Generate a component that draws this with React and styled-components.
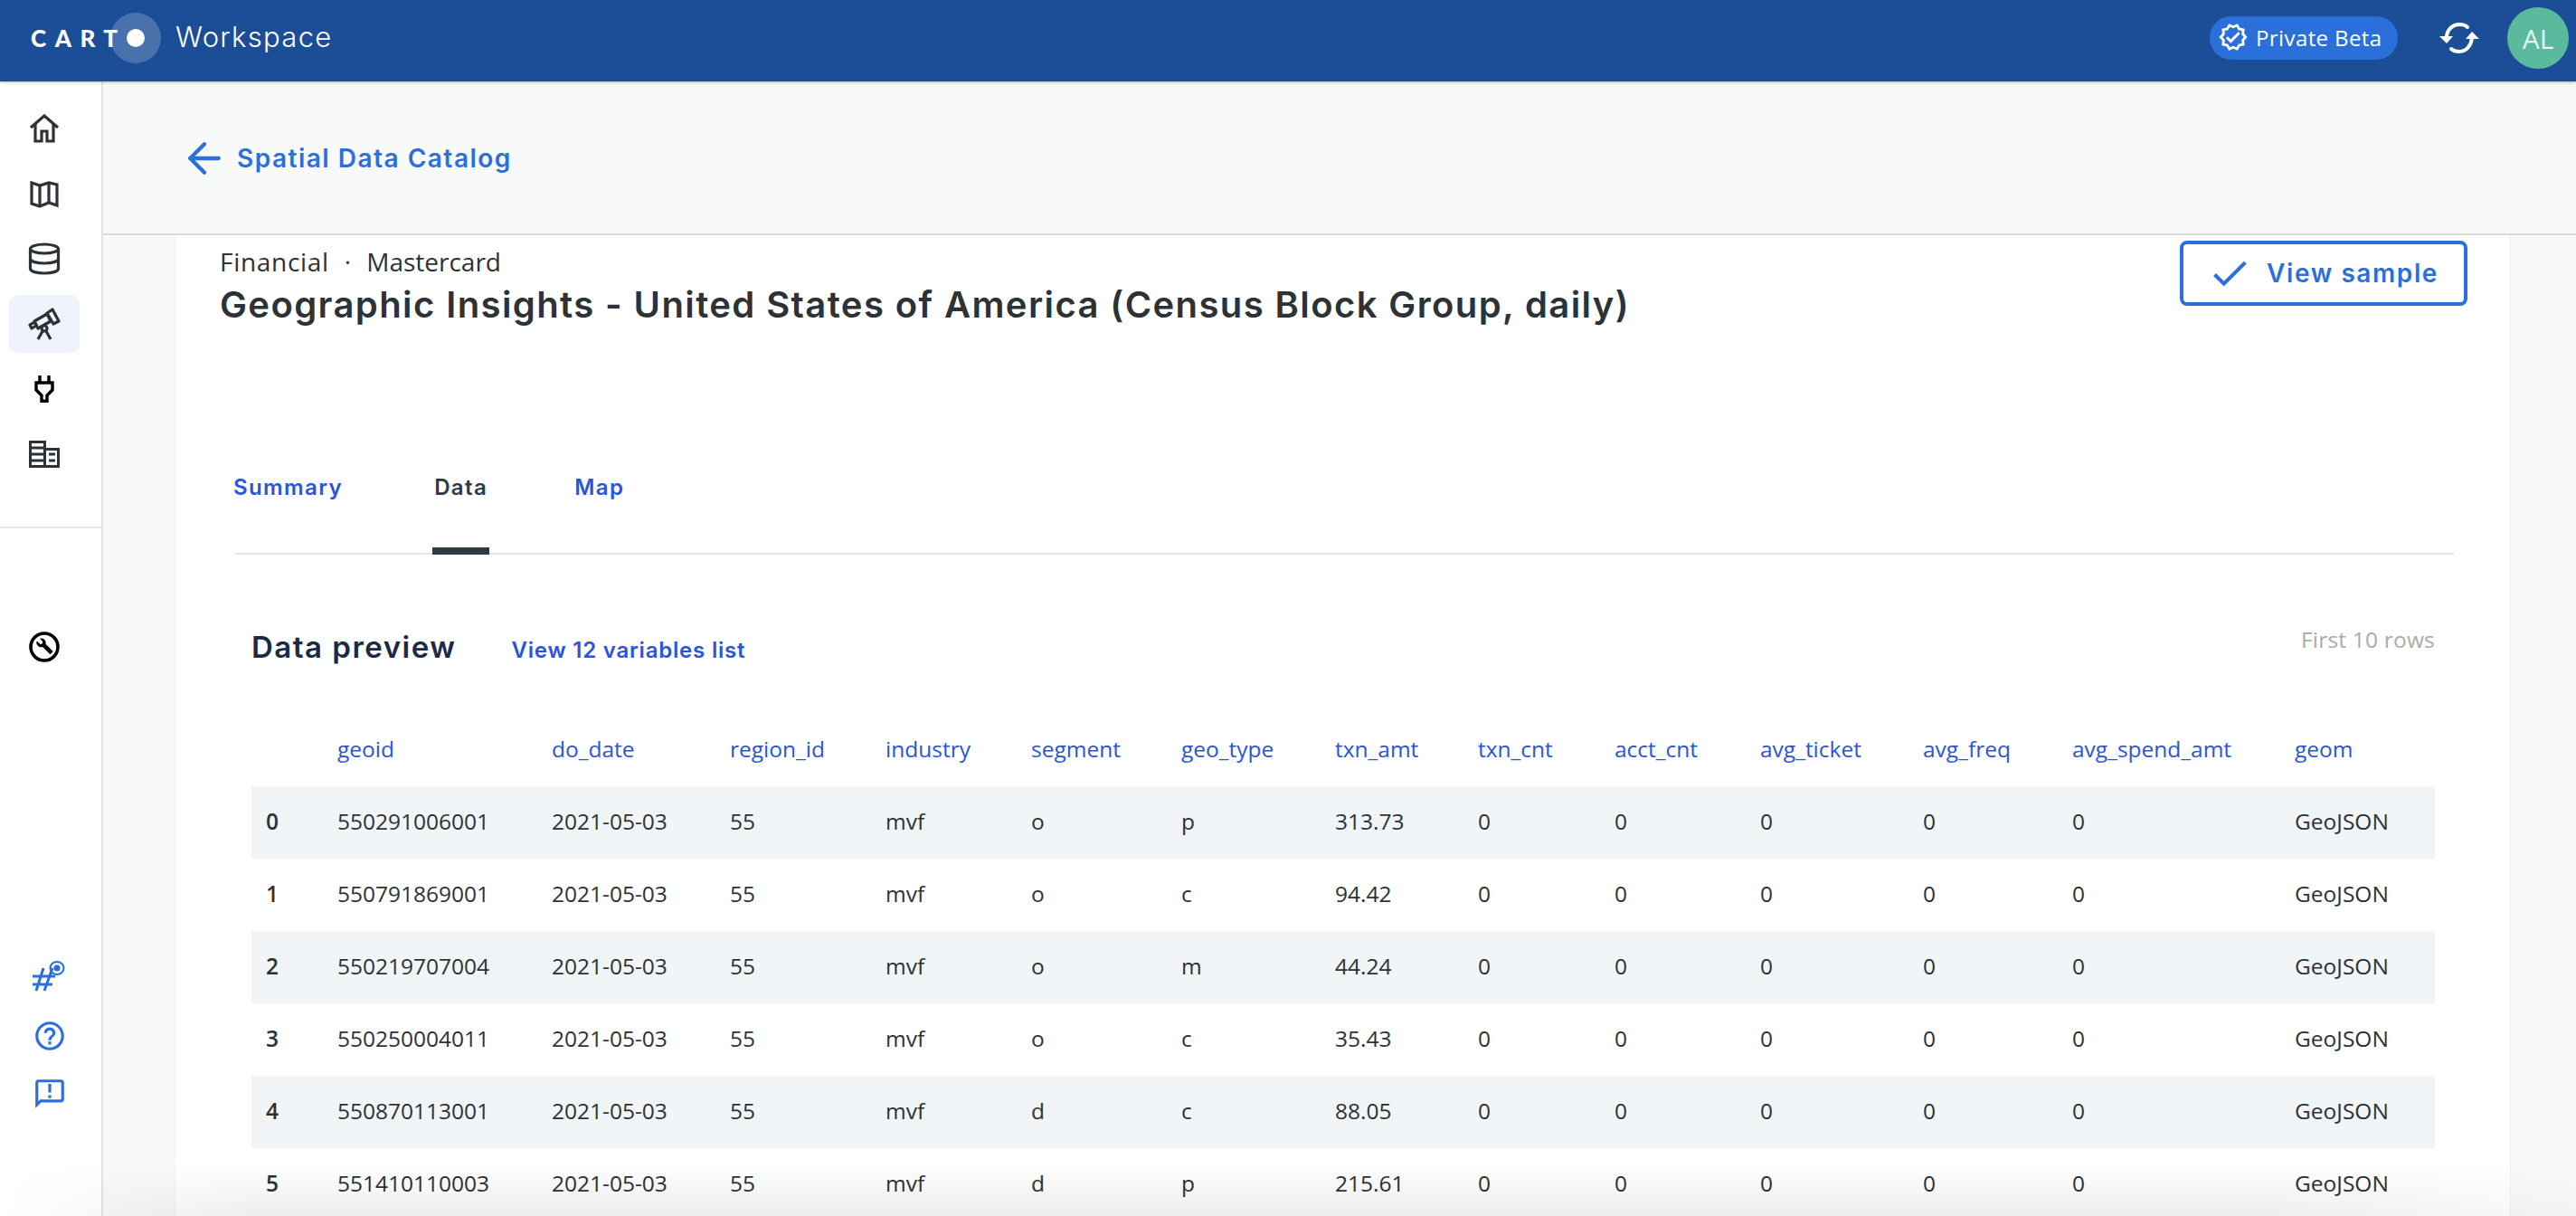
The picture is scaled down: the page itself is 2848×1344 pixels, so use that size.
import React from 'react';
import styled, { createGlobalStyle } from 'styled-components';
import { ArrowLeft } from 'lucide-react';
import { MdCheck, MdHelpOutline, MdOutlineAnnouncement, MdOutlineVerified } from 'react-icons/md';

const Global = createGlobalStyle`
  html, body { margin: 0; padding: 0; background: #fff; }
  * { box-sizing: border-box; }
`
const Page = styled.div`
  position: relative;
  display: flex;
  flex-direction: column;
  height: 100vh;
  overflow: hidden;
  font-family: 'Open Sans', sans-serif;
  color: #2c3a45;
`
//Header
const TopBar = styled.header`
  flex: none;
  height: 90px;
  background-color: #1c4e98;
  box-shadow: 0 1px 3px rgba(0, 0, 0, 0.3);
  z-index: 2;
  display: flex;
  align-items: center;
  padding: 0 8px 6px 34px;
`
const Logo = styled.div`
  display: flex;
  align-items: center;
  width: 160px;
  font-family: Lato, sans-serif;
  font-weight: 900;
  font-size: 26px;
  letter-spacing: 9.5px;
  color: #fff;
`
const LogoDot = styled.span`
  flex: none;
  width: 56px;
  height: 56px;
  margin-left: -18px;
  border-radius: 50%;
  background-color: rgba(255, 255, 255, 0.2);
  display: flex;
  align-items: center;
  justify-content: center;
  &::after {
    content: "";
    width: 20px;
    height: 20px;
    border-radius: 50%;
    background-color: #fff;
  }
`
const Product = styled.div`
  padding-bottom: 3px;
  font-family: Inter, sans-serif;
  font-weight: 300;
  font-size: 31px;
  letter-spacing: 1.3px;
  color: #fff;
`
const BetaPill = styled.div`
  margin-left: auto;
  width: 208px;
  height: 48px;
  border-radius: 24px;
  background-color: #2b6fdb;
  color: #fff;
  display: flex;
  align-items: center;
  gap: 8px;
  padding: 0 0 2px 9px;
  font-size: 24px;
  letter-spacing: 0.4px;
  svg { font-size: 34px; }
`
const SyncButton = styled.div`
  display: flex;
  margin-left: 46px;
  margin-right: 31px;
`
const Avatar = styled.div`
  width: 68px;
  height: 68px;
  border-radius: 50%;
  background-color: #5bba9d;
  color: #e4f4ee;
  font-size: 30px;
  display: flex;
  align-items: center;
  justify-content: center;
`
const Body = styled.div`
  flex: 1;
  min-height: 0;
  display: flex;
`
//Sidebar
const SideBar = styled.nav`
  flex: none;
  width: 114px;
  border-right: 2px solid #e2e3e3;
  background-color: #fff;
  display: flex;
  flex-direction: column;
`
const NavList = styled.div`
  display: flex;
  flex-direction: column;
  align-items: flex-start;
  padding: 20px 0 0 10px;
  gap: 8px;
  height: 494px;
  border-bottom: 2px solid #e8e8e8;
`
const ToolGroup = styled.div`
  padding: 99px 0 0 10px;
`
const NavItem = styled.div`
  width: 78px;
  height: 64px;
  flex: none;
  display: flex;
  align-items: center;
  justify-content: center;
  border-radius: 10px;
  background-color: ${props => props.active ? "#eff3fb" : "transparent"};
  color: ${props => props.dark ? "#000" : "#2c3236"};
`
const HelpList = styled.div`
  margin-top: auto;
  padding: 0 0 120px 36px;
  display: flex;
  flex-direction: column;
  gap: 30px;
  color: #2b6fdb;
`
const Helper = styled.div`
  display: flex;
  height: 34px;
`
//Main
const Main = styled.main`
  flex: 1;
  min-width: 0;
  background-color: #f8f9f9;
  display: flex;
  flex-direction: column;
`
const SubHeader = styled.div`
  flex: none;
  height: 170px;
  border-bottom: 2px solid #d9dbdb;
  display: flex;
  align-items: center;
  gap: 9px;
  padding: 2px 0 0 85px;
  color: #2b6fdb;
  font-family: Inter, sans-serif;
  font-weight: 600;
  font-size: 28px;
  letter-spacing: 1.5px;
`
const Card = styled.section`
  flex: 1;
  margin: 0 72px 0 79px;
  background-color: #fff;
  border-left: 1px solid #f0f1f1;
  border-right: 1px solid #f0f1f1;
  padding: 6px 47px 0 49px;
`
const CardHead = styled.div`
  display: flex;
  justify-content: space-between;
  align-items: flex-start;
  height: 219px;
`
const TitleBlock = styled.div`
  padding-top: 4px;
`
const Crumbs = styled.div`
  display: flex;
  gap: 17px;
  font-size: 28px;
  line-height: 38px;
  color: #2c3236;
`
const CrumbRoot = styled.span`
  font-weight: 500;
  letter-spacing: 0.7px;
`
const Title = styled.h1`
  margin: 5px 0 0;
  font-family: Inter, sans-serif;
  font-weight: 600;
  font-size: 40px;
  line-height: 48px;
  letter-spacing: 1.4px;
  color: #2c3236;
`
const SampleButton = styled.button`
  width: 318px;
  height: 72px;
  border: 4px solid #2b6fdb;
  border-radius: 8px;
  background-color: #fff;
  color: #2b6fdb;
  display: flex;
  align-items: center;
  gap: 16px;
  font-family: Inter, sans-serif;
  font-weight: 600;
  font-size: 28px;
  letter-spacing: 1.6px;
  padding: 0 0 0 26px;
`
const Tabs = styled.div`
  display: flex;
  height: 128px;
  margin: 0 15px 0 16px;
  border-bottom: 2px solid #e6e6ea;
`
const Tab = styled.div`
  height: 128px;
  margin-left: ${props => props.offset}px;
  padding: 0 2px 14px;
  display: flex;
  align-items: center;
  border-bottom: 8px solid ${props => props.active ? "#2c3a45" : "transparent"};
  color: ${props => props.active ? "#2c3a45" : "#2a55d8"};
  font-family: Inter, sans-serif;
  font-weight: 600;
  font-size: 24px;
  letter-spacing: 1.4px;
`
const PreviewHead = styled.div`
  display: flex;
  align-items: baseline;
  margin: 82px 36px 0 35px;
  height: 86px;
`
const PreviewTitle = styled.h2`
  margin: 0;
  font-family: Inter, sans-serif;
  font-weight: 600;
  font-size: 33px;
  letter-spacing: 1.5px;
  color: #1b2a44;
`
const VariablesLink = styled.div`
  margin-left: 61px;
  font-family: Inter, sans-serif;
  font-weight: 600;
  font-size: 24px;
  letter-spacing: 0.8px;
  color: #2a55d8;
`
const RowCount = styled.div`
  margin-left: auto;
  font-size: 24.5px;
  line-height: 24px;
  letter-spacing: 0.2px;
  color: #aaaaaa;
  align-self: flex-start;
`
const Table = styled.div`
  margin: 0 36px 0 35px;
`
const Row = styled.div`
  display: grid;
  grid-template-columns: 79px 237px 197px 172px 161px 166px 170px 158px 151px 161px 180px 165px 246px 1fr;
  align-items: center;
  height: ${props => props.head ? "88px" : "80px"};
  padding: ${props => props.head ? "4px 0 0 16px" : "0 0 4px 16px"};
  background-color: ${props => props.striped ? "#f2f5f8" : "transparent"};
  color: ${props => props.head ? "#2a55d8" : "#2c3236"};
  font-size: 24.5px;
`
const RowIndex = styled.span`
  font-weight: 600;
`
const BottomFade = styled.div`
  position: absolute;
  left: 0;
  right: 0;
  bottom: 0;
  height: 60px;
  background: linear-gradient(rgba(0, 0, 0, 0), rgba(0, 0, 0, 0.07));
  mask-image: linear-gradient(90deg, transparent, #000 10%, #000 88%, rgba(0, 0, 0, 0.3));
  pointer-events: none;
`

const columns = ["geoid", "do_date", "region_id", "industry", "segment", "geo_type", "txn_amt", "txn_cnt", "acct_cnt", "avg_ticket", "avg_freq", "avg_spend_amt", "geom"]

const rows = [
  ["550291006001", "o", "p", "313.73"],
  ["550791869001", "o", "c", "94.42"],
  ["550219707004", "o", "m", "44.24"],
  ["550250004011", "o", "c", "35.43"],
  ["550870113001", "d", "c", "88.05"],
  ["551410110003", "d", "p", "215.61"],
]

const SyncIcon = () => (
  <svg width="44" height="34" viewBox="0 0 44 34" fill="none" stroke="#fff" strokeWidth="4" strokeLinecap="round">
    <path d="M8 15C9 7 15 2 22 2c4 0 7 1 9 3" />
    <path d="M36 17c-1 8-6 15-14 15-4 0-7-1-9-3" />
    <path d="M0 15h15L8 23z" fill="#fff" stroke="none" />
    <path d="M29 18h15L36 10z" fill="#fff" stroke="none" />
  </svg>
)

const HomeIcon = () => (
  <svg width="34" height="32" viewBox="0 0 34 32" fill="none" stroke="currentColor" strokeWidth="3.2">
    <path d="M2 15L17 2l15 13" />
    <path d="M7 11v19h7V19h6v11h7V11" />
  </svg>
)
const MapIcon = () => (
  <svg width="32" height="32" viewBox="0 0 32 32" fill="none" stroke="currentColor" strokeWidth="3.2">
    <path d="M2 4l9 3 10-3 9 2v23l-9-3-10 4-9-3z" />
    <path d="M11 7v22M21 4v22" />
  </svg>
)
const DatabaseIcon = () => (
  <svg width="36" height="36" viewBox="0 0 36 36" fill="none" stroke="currentColor" strokeWidth="3.2">
    <ellipse cx="18" cy="7" rx="15.5" ry="5" />
    <path d="M2.500 7v22c0 3 7 5 15.500 5s15.500-2 15.500-5V7" />
    <path d="M2.500 18c0 3 7 5 15.500 5s15.500-2 15.500-5" />
  </svg>
)
const TelescopeIcon = () => (
  <svg width="36" height="36" viewBox="0 0 36 36" fill="none" stroke="currentColor" strokeWidth="3.2" strokeLinejoin="round">
    <path d="M2 19l5-3 2 4-5 3z" />
    <path d="M7 15l14-8 4 8-14 8z" />
    <path d="M21 6l6-4 7 13-6 3z" />
    <circle cx="18" cy="23" r="3" />
    <path d="M16 26l-5 9M20 26l5 9" />
  </svg>
)
const PlugIcon = () => (
  <svg width="22" height="30" viewBox="0 0 22 30" fill="none" stroke="currentColor" strokeWidth="3.4">
    <path d="M6 0v8M16 0v8" />
    <path d="M2 8h18v8l-6 6v6.300H8V22l-6-6z" />
  </svg>
)
const BuildingIcon = () => (
  <svg width="34" height="30" viewBox="0 0 34 30" fill="none" stroke="currentColor" strokeWidth="3">
    <path d="M1.500 1.500h16v27h-16zM1.500 8h16M1.500 15h16M1.500 22h16" />
    <path d="M17.500 9.500h15v19h-15" />
    <path d="M22 15h7M22 22h7" />
  </svg>
)
const WrenchIcon = () => (
  <svg width="34" height="34" viewBox="0 0 34 34">
    <circle cx="17" cy="17" r="15" fill="none" stroke="#000" strokeWidth="3.6" />
    <path d="M9 10.500l3.500 3.500 2.200-.6.6-2.200L12 7.800c3-1 6.200.9 6.600 4 .1.7.1 1.300-.1 2l8.200 8.200-3.300 3.300-8.300-8.200c-3.600 1-7.100-2.100-6.800-5.700z" fill="#000" />
  </svg>
)
const HashIcon = () => (
  <svg width="36" height="34" viewBox="0 0 36 34" fill="none" stroke="currentColor" strokeWidth="3">
    <path d="M12 8L4 33M22 8L13 33M0 17h25M0 26h22" />
    <ellipse cx="27" cy="8" rx="7.500" ry="7" strokeWidth="2" />
    <circle cx="27" cy="8" r="3.500" fill="currentColor" stroke="none" />
  </svg>
)

function SideNav() {
  return (
    <SideBar>
      <NavList>
        <NavItem><HomeIcon /></NavItem>
        <NavItem><MapIcon /></NavItem>
        <NavItem><DatabaseIcon /></NavItem>
        <NavItem active><TelescopeIcon /></NavItem>
        <NavItem dark><PlugIcon /></NavItem>
        <NavItem><BuildingIcon /></NavItem>
      </NavList>
      <ToolGroup>
        <NavItem dark><WrenchIcon /></NavItem>
      </ToolGroup>
      <HelpList>
        <Helper><HashIcon /></Helper>
        <Helper><MdHelpOutline size={38} /></Helper>
        <Helper><MdOutlineAnnouncement size={38} /></Helper>
      </HelpList>
    </SideBar>
  );
}

function App() {
  return (
    <Page>
      <Global />
      <TopBar>
        <Logo>CART<LogoDot /></Logo>
        <Product>Workspace</Product>
        <BetaPill><MdOutlineVerified />Private Beta</BetaPill>
        <SyncButton><SyncIcon /></SyncButton>
        <Avatar>AL</Avatar>
      </TopBar>
      <Body>
        <SideNav />
        <Main>
          <SubHeader>
            <ArrowLeft size={54} strokeWidth={1.9} />
            Spatial Data Catalog
          </SubHeader>
          <Card>
            <CardHead>
              <TitleBlock>
                <Crumbs><CrumbRoot>Financial</CrumbRoot><span>·</span><span>Mastercard</span></Crumbs>
                <Title>Geographic Insights - United States of America (Census Block Group, daily)</Title>
              </TitleBlock>
              <SampleButton><MdCheck size={50} />View sample</SampleButton>
            </CardHead>
            <Tabs>
              <Tab offset={-3}>Summary</Tab>
              <Tab offset={97} active>Data</Tab>
              <Tab offset={92}>Map</Tab>
            </Tabs>
            <PreviewHead>
              <PreviewTitle>Data preview</PreviewTitle>
              <VariablesLink>View 12 variables list</VariablesLink>
              <RowCount>First 10 rows</RowCount>
            </PreviewHead>
            <Table>
              <Row head>
                <span />
                {columns.map(name => <span key={name}>{name}</span>)}
              </Row>
              {rows.map((row, i) => (
                <Row key={row[0]} striped={i % 2 === 0}>
                  <RowIndex>{i}</RowIndex>
                  <span>{row[0]}</span>
                  <span>2021-05-03</span>
                  <span>55</span>
                  <span>mvf</span>
                  <span>{row[1]}</span>
                  <span>{row[2]}</span>
                  <span>{row[3]}</span>
                  <span>0</span>
                  <span>0</span>
                  <span>0</span>
                  <span>0</span>
                  <span>0</span>
                  <span>GeoJSON</span>
                </Row>
              ))}
            </Table>
          </Card>
        </Main>
      </Body>
      <BottomFade />
    </Page>
  );
}

export default App;
